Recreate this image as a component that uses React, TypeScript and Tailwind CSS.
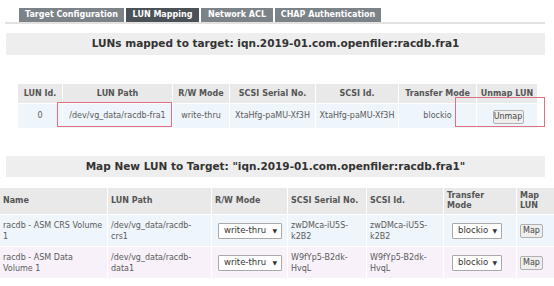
import React from "react";

const font = { fontFamily: '"DejaVu Sans", Verdana, sans-serif' };

function Sel({ label, w }: { label: string; w: string }) {
  return (
    <div className={`${w} h-[16px] border border-[#a9a9a9] bg-white rounded-[1px] flex items-center justify-between pl-[5px] pr-[4px] text-[8.5px] text-[#333]`}>
      <span>{label}</span>
      <span className="text-[6px]">▼</span>
    </div>
  );
}

function Btn({ label, w }: { label: string; w: string }) {
  return (
    <div className={`${w} h-[14px] border border-[#b0b0b0] bg-[#eeeeee] rounded-[2px] flex items-center justify-center text-[8px] text-[#444]`}>
      {label}
    </div>
  );
}

export default function App() {
  const tabs = [
    { t: "Target Configuration", w: "w-[105px]", a: false },
    { t: "LUN Mapping", w: "w-[73px]", a: true },
    { t: "Network ACL", w: "w-[72px]", a: false },
    { t: "CHAP Authentication", w: "w-[106px]", a: false },
  ];
  const heads2: React.ReactNode[] = [
    "Name",
    "LUN Path",
    "R/W Mode",
    "SCSI Serial No.",
    "SCSI Id.",
    <>Transfer<br />Mode</>,
    <>Map<br />LUN</>,
  ];
  return (
    <div style={font} className="w-[554px] h-[286px] bg-white relative overflow-hidden">
      {/* tabs */}
      <div className="pt-[8px] pl-[5px]">
        <div className="w-[540px] border-b-2 border-[#e2e2e2] flex gap-[2px] pl-[14px]">
          {tabs.map((t) => (
            <div
              key={t.t}
              className={`${t.w} h-[14px] flex items-center justify-center text-[8px] font-bold text-white ${t.a ? "bg-[#4a5157]" : "bg-[#7b8288]"}`}
            >
              {t.t}
            </div>
          ))}
        </div>
      </div>
      {/* title 1 */}
      <div className="mt-[9px] ml-[6px] w-[539px] h-[22px] bg-[#eeeeee] flex items-center justify-center text-[10.5px] font-bold text-[#333]">
        LUNs mapped to target: iqn.2019-01.com.openfiler:racdb.fra1
      </div>
      {/* table 1 */}
      <div className="mt-[29px] ml-[18px] relative">
        <table className="border-separate border-spacing-[1px] table-fixed text-[8px] text-[#5a5a5a] w-[519px] -m-[1px]">
          <colgroup>
            <col className="w-[44px]" />
            <col className="w-[109px]" />
            <col className="w-[56px]" />
            <col className="w-[85px]" />
            <col className="w-[82px]" />
            <col className="w-[77px]" />
            <col className="w-[60px]" />
          </colgroup>
          <thead>
            <tr className="h-[19px] bg-[#e9e9e9]">
              {["LUN Id.", "LUN Path", "R/W Mode", "SCSI Serial No.", "SCSI Id.", "Transfer Mode", "Unmap LUN"].map((h) => (
                <th key={h} className="text-center font-bold px-0 whitespace-nowrap text-[#555]">{h}</th>
              ))}
            </tr>
          </thead>
          <tbody>
            <tr className="h-[24px] bg-[#eef5fb]">
              <td className="text-center">0</td>
              <td className="text-center whitespace-nowrap">/dev/vg_data/racdb-fra1</td>
              <td className="text-center">write-thru</td>
              <td className="text-center whitespace-nowrap">XtaHfg-paMU-Xf3H</td>
              <td className="text-center whitespace-nowrap">XtaHfg-paMU-Xf3H</td>
              <td className="text-center">blockio</td>
              <td className="text-center"><div className="flex justify-center pl-[2px] pt-[2px]"><Btn label="Unmap" w="w-[31px]" /></div></td>
            </tr>
          </tbody>
        </table>
        <div className="absolute left-[39px] top-[19px] w-[115px] h-[25px] border border-[#e07080]" />
        <div className="absolute left-[437px] top-[14px] w-[90px] h-[30px] border border-[#e07080]" />
      </div>
      {/* title 2 */}
      <div className="mt-[28px] ml-[6px] w-[539px] h-[21px] bg-[#eeeeee] flex items-center justify-center text-[10.5px] font-bold text-[#333]">
        Map New LUN to Target: "iqn.2019-01.com.openfiler:racdb.fra1"
      </div>
      {/* table 2 */}
      <div className="mt-[11px]">
        <table className="border-separate border-spacing-[1px] table-fixed text-[8px] text-[#5a5a5a] w-[555px] -m-[1px] leading-[11px]">
          <colgroup>
            <col className="w-[107px]" />
            <col className="w-[103px]" />
            <col className="w-[75px]" />
            <col className="w-[78px]" />
            <col className="w-[76px]" />
            <col className="w-[72px]" />
            <col className="w-[42px]" />
          </colgroup>
          <thead>
            <tr className="h-[26px] bg-[#e9e9e9]">
              {heads2.map((h, i) => (
                <th key={i} className="text-left font-bold pl-[3px] pr-[2px] align-middle text-[#555] leading-[10px]">{h}</th>
              ))}
            </tr>
          </thead>
          <tbody>
            {[
              { bg: "bg-[#eef5fb]", n: ["racdb - ASM CRS Volume", "1"], p: ["/dev/vg_data/racdb-", "crs1"], s: ["zwDMca-iU5S-", "k2B2"] },
              { bg: "bg-[#f8f1fa]", n: ["racdb - ASM Data", "Volume 1"], p: ["/dev/vg_data/racdb-", "data1"], s: ["W9fYp5-B2dk-", "HvqL"] },
            ].map((r, i) => (
              <tr key={i} className={`h-[31px] ${r.bg}`}>
                <td className="pl-[3px] align-middle whitespace-nowrap">{r.n[0]}<br />{r.n[1]}</td>
                <td className="pl-[3px] align-middle">{r.p[0]}<br />{r.p[1]}</td>
                <td className="pl-[6px] align-middle"><Sel label="write-thru" w="w-[64px]" /></td>
                <td className="pl-[3px] align-middle">{r.s[0]}<br />{r.s[1]}</td>
                <td className="pl-[3px] align-middle">{r.s[0]}<br />{r.s[1]}</td>
                <td className="pl-[8px] align-middle"><Sel label="blockio" w="w-[50px]" /></td>
                <td className="pl-[3px] align-middle"><Btn label="Map" w="w-[23px]" /></td>
              </tr>
            ))}
          </tbody>
        </table>
      </div>
    </div>
  );
}
